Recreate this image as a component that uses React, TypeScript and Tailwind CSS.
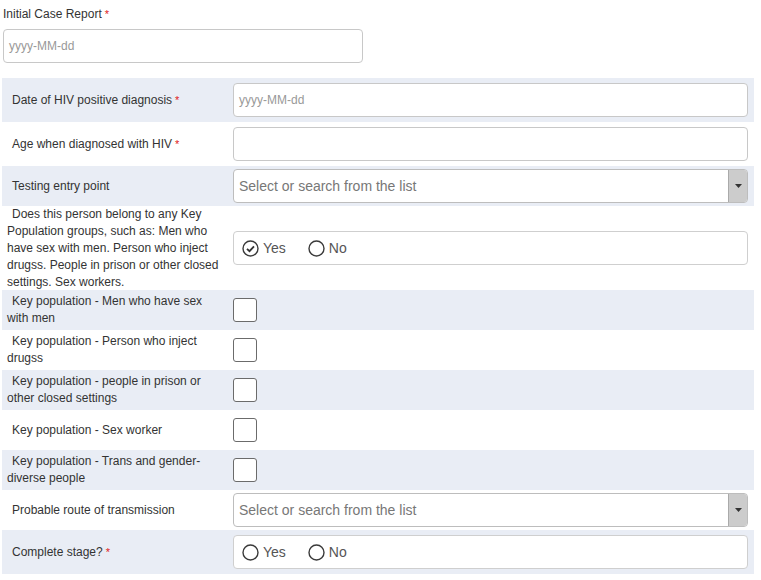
import React from "react";

const font = { fontFamily: '"Liberation Sans", Arial, sans-serif' };

function Req() {
  return <span className="text-[#e02020] text-[11px] ml-[3px]">*</span>;
}

function Label({ children }: { children: React.ReactNode }) {
  return (
    <div className="w-[231px] shrink-0 pl-[5px] pr-[8px] text-[12px] leading-[17px] text-[#333] indent-[5px]">
      {children}
    </div>
  );
}

function TextBox({ placeholder }: { placeholder?: string }) {
  return (
    <div className="flex-1 h-[34px] border border-[#c8c8c8] rounded-[4px] bg-white flex items-center pl-[5px] text-[12px] text-[#999]">
      {placeholder}
    </div>
  );
}

function SelectBox() {
  return (
    <div className="flex-1 h-[34px] border border-[#bdbdbd] rounded-[4px] bg-white flex items-stretch overflow-hidden">
      <div className="flex-1 flex items-center pl-[5px] text-[14px] text-[#777] pt-[1px]">Select or search from the list</div>
      <div className="w-[19px] bg-[#cccccc] border-l border-[#aaa] flex items-center justify-center">
        <svg width="7" height="4" viewBox="0 0 7 4">
          <path d="M0 0 L7 0 L3.5 4 Z" fill="#333" />
        </svg>
      </div>
    </div>
  );
}

function RadioCircle({ checked }: { checked?: boolean }) {
  return (
    <svg width="17" height="17" viewBox="0 0 17 17">
      <circle cx="8.5" cy="8.5" r="7.5" fill="white" stroke="#3a3a3a" strokeWidth="1.4" />
      {checked && <path d="M5 8.8 L7.5 11.2 L12 6.3" fill="none" stroke="#333" strokeWidth="1.8" />}
    </svg>
  );
}

function Radios({ yes }: { yes?: boolean }) {
  return (
    <div className="flex-1 h-[34px] border border-[#cfcfcf] rounded-[4px] bg-white flex items-center pl-[8px] text-[14px] text-[#555]">
      <RadioCircle checked={yes} />
      <span className="ml-[4px]">Yes</span>
      <span className="ml-[22px] flex items-center">
        <RadioCircle />
        <span className="ml-[4px]">No</span>
      </span>
    </div>
  );
}

function Check() {
  return <div className="w-[24px] h-[24px] border border-[#6b6b6b] rounded-[3px] bg-white" />;
}

function Row({ bg, className, children }: { bg?: boolean; className?: string; children: React.ReactNode }) {
  return (
    <div className={`flex items-center pr-[6px] ${bg ? "bg-[#e9edf5]" : "bg-white"} ${className ?? ""}`}>
      {children}
    </div>
  );
}

export default function App() {
  return (
    <div className="w-[761px] h-[580px] bg-white" style={font}>
      <div className="pt-[6px] pl-[3px]">
        <div className="text-[12px] leading-[17px] text-[#333]">
          Initial Case Report<Req />
        </div>
        <div className="mt-[6px] w-[360px] h-[34px] border border-[#c8c8c8] rounded-[4px] flex items-center pl-[5px] text-[12px] text-[#999]">
          yyyy-MM-dd
        </div>
      </div>
      <div className="mt-[15px] ml-[2px] w-[752px] flex flex-col">
        <Row bg className="h-[44px]">
          <Label>Date of HIV positive diagnosis<Req /></Label>
          <TextBox placeholder="yyyy-MM-dd" />
        </Row>
        <Row className="h-[44px]">
          <Label>Age when diagnosed with HIV<Req /></Label>
          <TextBox />
        </Row>
        <Row bg className="h-[40px]">
          <Label>Testing entry point</Label>
          <SelectBox />
        </Row>
        <Row className="h-[84px]">
          <Label>
            Does this person belong to any Key Population groups, such as: Men who have sex with men. Person who inject drugss. People in prison or other closed settings. Sex workers.
          </Label>
          <Radios yes />
        </Row>
        <Row bg className="h-[40px]">
          <Label>Key population - Men who have sex with men</Label>
          <Check />
        </Row>
        <Row className="h-[40px]">
          <Label>Key population - Person who inject drugss</Label>
          <Check />
        </Row>
        <Row bg className="h-[40px]">
          <Label>Key population - people in prison or other closed settings</Label>
          <Check />
        </Row>
        <Row className="h-[40px]">
          <Label>Key population - Sex worker</Label>
          <Check />
        </Row>
        <Row bg className="h-[40px]">
          <Label>Key population - Trans and gender-diverse people</Label>
          <Check />
        </Row>
        <Row className="h-[40px]">
          <Label>Probable route of transmission</Label>
          <SelectBox />
        </Row>
        <Row bg className="h-[44px]">
          <Label>Complete stage?<Req /></Label>
          <Radios />
        </Row>
      </div>
    </div>
  );
}
